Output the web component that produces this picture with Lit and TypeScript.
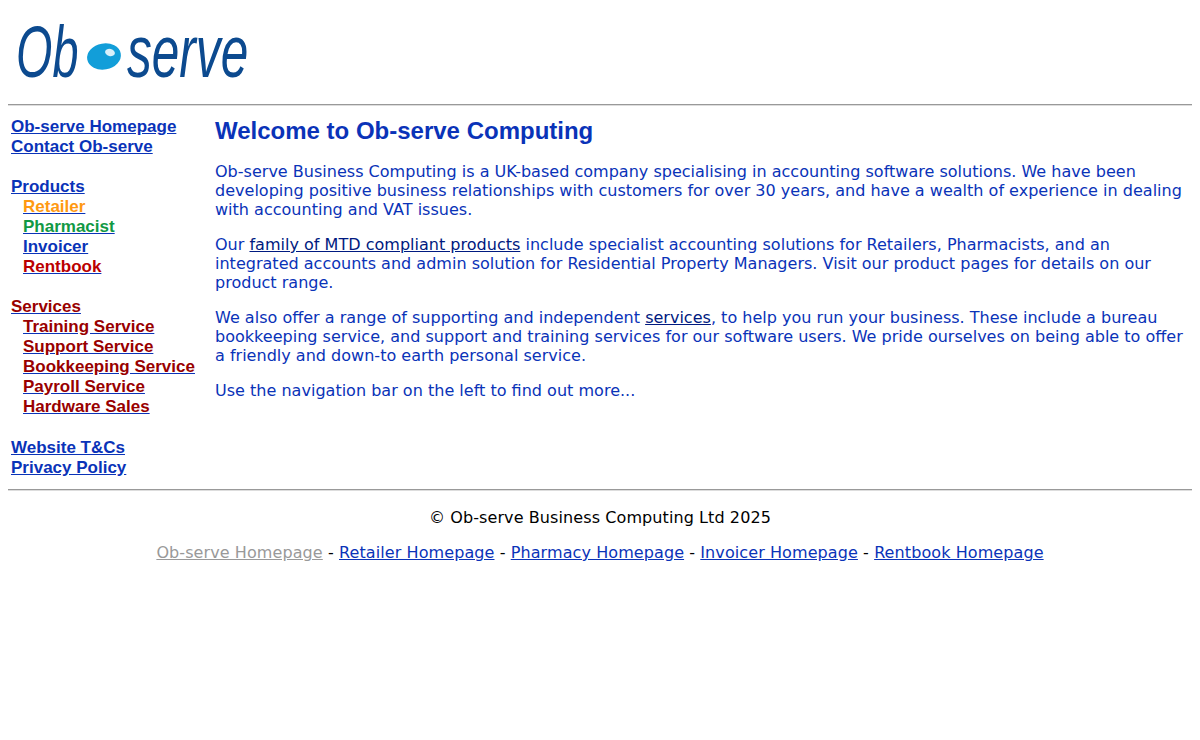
import { LitElement, html, css } from "lit";
import { customElement } from "lit/decorators.js";

@customElement("app-root")
export class AppRoot extends LitElement {
  static styles = css`
    :host { display: block; min-height: 740px; background: #fff; padding: 0 8px; box-sizing: border-box;
      font-family: "DejaVu Sans", Verdana, sans-serif; color: #0a33b8; }
    .logo { display: block; height: 104px; }
    .logo svg { display: block; }
    .rule { height: 0; border-top: 1px solid #999; border-bottom: 1px solid #ddd; margin: 0; }
    .layout { display: grid; grid-template-columns: 207px 1fr; height: 383px; }
    nav { display: flex; flex-direction: column; padding: 11px 0 0 3px;
      font: bold 17px/20px "Liberation Sans", Arial, sans-serif; }
    nav a { color: #0a33b8; text-decoration: underline; text-decoration-color: #0a33b8; height: 20px; white-space: nowrap; }
    nav .sub { margin-left: 12px; }
    nav .gap { height: 20px; flex: none; }
    nav .gap.wide { height: 21px; }
    .orange { color: #ff9911; }
    .green { color: #119944; }
    .red { color: #bb0000; }
    .dark { color: #990000; }
    main { padding-top: 11px; font-size: 16.04px; line-height: 19px; }
    h1 { margin: 0 0 17px; font: bold 24px/28px "Liberation Sans", Arial, sans-serif; color: #0a33b8; }
    p { margin: 0 0 16px; }
    main a { color: #001a80; }
    footer { text-align: center; font-size: 16px; line-height: 19px; color: #000; padding-top: 17px; letter-spacing: 0.09px; }
    footer p { margin: 0 0 16px; }
    footer a { color: #0a33b8; }
    footer a.cur { color: #999; }
  `;

  render() {
    return html`
      <div class="logo">
        <svg width="300" height="104" viewBox="0 0 300 104" role="img" aria-label="Ob-serve logo">
          <text transform="translate(8 77) scale(0.65 1)" font-family="Liberation Sans" font-style="italic" font-size="72" fill="#0c4a8f">Ob</text>
          <text transform="translate(119 77) scale(0.67 1)" font-family="Liberation Sans" font-style="italic" font-size="74" fill="#0c4a8f">serve</text>
          <ellipse cx="96" cy="56.500" rx="17" ry="13" fill="#129ed9" transform="rotate(-10 96 56.500)"/>
          <ellipse cx="102" cy="52.500" rx="5" ry="3.500" fill="#d9f0fa" transform="rotate(15 102 52.500)"/>
        </svg>
      </div>
      <div class="rule"></div>
      <div class="layout">
        <nav>
          <a href="#">Ob-serve Homepage</a>
          <a href="#">Contact Ob-serve</a>
          <div class="gap"></div>
          <a href="#">Products</a>
          <a href="#" class="sub"><span class="orange">Retailer</span></a>
          <a href="#" class="sub"><span class="green">Pharmacist</span></a>
          <a href="#" class="sub">Invoicer</a>
          <a href="#" class="sub"><span class="red">Rentbook</span></a>
          <div class="gap"></div>
          <a href="#"><span class="dark">Services</span></a>
          <a href="#" class="sub"><span class="dark">Training Service</span></a>
          <a href="#" class="sub"><span class="dark">Support Service</span></a>
          <a href="#" class="sub"><span class="dark">Bookkeeping Service</span></a>
          <a href="#" class="sub"><span class="dark">Payroll Service</span></a>
          <a href="#" class="sub"><span class="dark">Hardware Sales</span></a>
          <div class="gap wide"></div>
          <a href="#">Website T&amp;Cs</a>
          <a href="#">Privacy Policy</a>
        </nav>
        <main>
          <h1>Welcome to Ob-serve Computing</h1>
          <p>Ob-serve Business Computing is a UK-based company specialising in accounting software solutions. We have been developing positive business relationships with customers for over 30 years, and have a wealth of experience in dealing with accounting and VAT issues.</p>
          <p>Our <a href="#">family of MTD compliant products</a> include specialist accounting solutions for Retailers, Pharmacists, and an integrated accounts and admin solution for Residential Property Managers. Visit our product pages for details on our product range.</p>
          <p>We also offer a range of supporting and independent <a href="#">services</a>, to help you run your business. These include a bureau bookkeeping service, and support and training services for our software users. We pride ourselves on being able to offer a friendly and down-to earth personal service.</p>
          <p>Use the navigation bar on the left to find out more...</p>
        </main>
      </div>
      <div class="rule"></div>
      <footer>
        <p>© Ob-serve Business Computing Ltd 2025</p>
        <p><a href="#" class="cur">Ob-serve Homepage</a> - <a href="#">Retailer Homepage</a> - <a href="#">Pharmacy Homepage</a> - <a href="#">Invoicer Homepage</a> - <a href="#">Rentbook Homepage</a></p>
      </footer>
    `;
  }
}
